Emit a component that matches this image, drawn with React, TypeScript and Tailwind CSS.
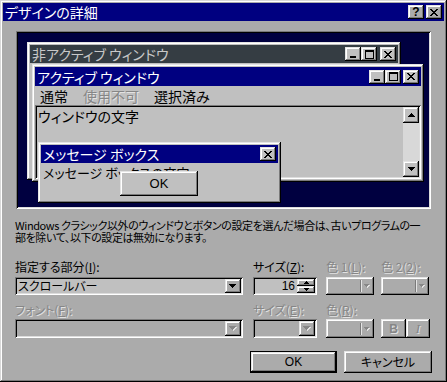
import React from "react";

const RAISED =
  "shadow-[inset_-1px_-1px_0_#000,inset_1px_1px_0_#e4e4e4,inset_-2px_-2px_0_#7a7a7a,inset_2px_2px_0_#fff]";
const SUNKEN =
  "shadow-[inset_1px_1px_0_#7a7a7a,inset_-1px_-1px_0_#fff,inset_2px_2px_0_#000,inset_-2px_-2px_0_#dcdcdc]";
const FONT = "font-['Noto_Sans_CJK_JP','Noto_Sans',sans-serif] [font-feature-settings:'palt']";
const DIS = "text-[#868686] [text-shadow:1px_1px_0_#e2e2e2]";

function XGlyph() {
  return (
    <svg width="8" height="7" viewBox="0 0 8 7" shapeRendering="crispEdges">
      <path
        fill="#000"
        d="M0 0h2v1H0z M6 0h2v1H6z M1 1h2v1H1z M5 1h2v1H5z M2 2h4v1H2z M3 3h2v1H3z M2 4h4v1H2z M1 5h2v1H1z M5 5h2v1H5z M0 6h2v1H0z M6 6h2v1H6z"
      />
    </svg>
  );
}
function MinGlyph() {
  return (
    <svg width="8" height="7" viewBox="0 0 8 7" shapeRendering="crispEdges" className="mt-[1px]">
      <path fill="#000" d="M1 5h6v2H1z" />
    </svg>
  );
}
function MaxGlyph() {
  return (
    <svg width="9" height="9" viewBox="0 0 9 9" shapeRendering="crispEdges">
      <path fill="#000" d="M0 0h9v2H0z M0 2h1v7H0z M8 2h1v7H8z M0 8h9v1H0z" />
    </svg>
  );
}
function DownTri({ dis = false }: { dis?: boolean }) {
  return (
    <svg width="8" height="5" viewBox="0 0 8 5" shapeRendering="crispEdges">
      {dis && <path fill="#e2e2e2" d="M1 1h7v1H1z M2 2h5v1H2z M3 3h3v1H3z M4 4h1v1H4z" />}
      <path fill={dis ? "#868686" : "#000"} d="M0 0h7v1H0z M1 1h5v1H1z M2 2h3v1H2z M3 3h1v1H3z" />
    </svg>
  );
}
function SmallDown({ dis = false }: { dis?: boolean }) {
  return (
    <svg width="6" height="4" viewBox="0 0 6 4" shapeRendering="crispEdges">
      {dis && <path fill="#e2e2e2" d="M1 1h5v1H1z M2 2h3v1H2z M3 3h1v1H3z" />}
      <path fill={dis ? "#868686" : "#000"} d="M0 0h5v1H0z M1 1h3v1H1z M2 2h1v1H2z" />
    </svg>
  );
}
function UpTri() {
  return (
    <svg width="7" height="4" viewBox="0 0 7 4" shapeRendering="crispEdges">
      <path fill="#000" d="M3 0h1v1H3z M2 1h3v1H2z M1 2h5v1H1z M0 3h7v1H0z" />
    </svg>
  );
}

function Cap({ children, face = "bg-[#c0c0c0]" }: { children: React.ReactNode; face?: string }) {
  return (
    <div className={`w-[16px] h-[14px] ${face} ${RAISED} flex items-center justify-center shrink-0`}>
      {children}
    </div>
  );
}

function Preview() {
  return (
    <div className={`mt-[10px] ml-[1px] w-[415px] h-[178px] p-[2px] ${SUNKEN}`}>
      <div className="relative w-full h-full bg-[#000040] overflow-hidden">
        {/* inactive window */}
        <div className={`absolute left-[9px] top-[9px] w-[374px] h-[138px] bg-[#c0c0c0] p-[3px] ${RAISED}`}>
          <div className="h-[18px] bg-[#353d43] flex items-center pl-[2px] pr-[2px]">
            <span className="text-[14px] leading-none text-[#c8c8c8] whitespace-nowrap">非アクティブ ウィンドウ</span>
            <div className="ml-auto flex">
              <Cap><MinGlyph /></Cap>
              <Cap><MaxGlyph /></Cap>
              <div className="w-[3px]" />
              <Cap><XGlyph /></Cap>
            </div>
          </div>
        </div>
        {/* active window */}
        <div className={`absolute left-[14px] top-[31px] w-[392px] h-[118px] bg-[#c0c0c0] p-[3px] flex flex-col ${RAISED}`}>
          <div className="h-[19px] bg-[#000080] flex items-center pl-[2px] pr-[2px] shrink-0">
            <span className="text-[14px] leading-none text-white whitespace-nowrap">アクティブ ウィンドウ</span>
            <div className="ml-auto flex">
              <Cap><MinGlyph /></Cap>
              <Cap><MaxGlyph /></Cap>
              <div className="w-[2px]" />
              <Cap><XGlyph /></Cap>
            </div>
          </div>
          <div className="h-[19px] flex items-center text-[14px] leading-none pl-[5px] shrink-0 whitespace-nowrap">
            <span>通常</span>
            <span className={`ml-[15px] ${DIS}`}>使用不可</span>
            <span className="ml-[15px]">選択済み</span>
          </div>
          <div className={`flex-1 ${SUNKEN} p-[2px] flex`}>
            <div className="flex-1 pl-[1px] pt-[2px] text-[14px] leading-none whitespace-nowrap">ウィンドウの文字</div>
            <div className="w-[16px] flex flex-col bg-[#d8d8d8]">
              <div className={`h-[16px] bg-[#c0c0c0] ${RAISED} flex items-center justify-center`}>
                <UpTri />
              </div>
              <div className="flex-1" />
              <div className={`h-[16px] bg-[#c0c0c0] ${RAISED} flex items-center justify-center`}>
                <svg width="7" height="4" viewBox="0 0 7 4" shapeRendering="crispEdges">
                  <path fill="#000" d="M0 0h7v1H0z M1 1h5v1H1z M2 2h3v1H2z M3 3h1v1H3z" />
                </svg>
              </div>
            </div>
          </div>
        </div>
        {/* message box */}
        <div className={`absolute left-[20px] top-[109px] w-[243px] h-[61px] bg-[#c0c0c0] p-[3px] ${RAISED}`}>
          <div className="h-[18px] bg-[#000080] flex items-center pl-[2px] pr-[2px]">
            <span className="text-[14px] leading-none text-white whitespace-nowrap">メッセージ ボックス</span>
            <div className="ml-auto flex">
              <Cap><XGlyph /></Cap>
            </div>
          </div>
          <div className="pl-[2px] pt-[3px] text-[13px] leading-none whitespace-nowrap">メッセージ ボックスの文字</div>
          <div
            className={`absolute left-[82px] top-[29px] w-[78px] h-[25px] bg-[#c0c0c0] ${RAISED} flex items-center justify-center text-[13px] leading-none font-['Liberation_Sans',sans-serif]`}
          >
            OK
          </div>
        </div>
      </div>
    </div>
  );
}

function Combo({
  className,
  text,
  disabled = false,
}: {
  className: string;
  text?: string;
  disabled?: boolean;
}) {
  return (
    <div className={`${className} ${SUNKEN} p-[2px] flex ${disabled ? "bg-[#ababab]" : "bg-[#c0c0c0]"}`}>
      <div className="flex-1 flex items-center pl-[1px] text-[12px] leading-none whitespace-nowrap">{text}</div>
      <div className={`w-[16px] bg-[#ababab] ${RAISED} flex items-center justify-center`}>
        <DownTri dis={disabled} />
      </div>
    </div>
  );
}

function ColorBtn({ className }: { className: string }) {
  return (
    <div className={`${className} bg-[#ababab] ${RAISED} flex items-center justify-end pr-[4px]`}>
      <div className="w-[1px] h-[12px] bg-[#7a7a7a] shadow-[1px_0_0_#e4e4e4] mr-[3px]" />
      <SmallDown dis />
    </div>
  );
}

export default function App() {
  return (
    <div
      className={`w-[447px] h-[382px] bg-[#ababab] p-[3px] flex flex-col text-black overflow-hidden ${FONT} shadow-[inset_-1px_-1px_0_#000,inset_1px_1px_0_#d8d8d8,inset_-2px_-2px_0_#7a7a7a,inset_2px_2px_0_#fff]`}
    >
      {/* title bar */}
      <div className="h-[18px] bg-[#000080] flex items-center pl-[2px] pr-[2px] shrink-0">
        <span className="text-[14px] leading-none text-white whitespace-nowrap">デザインの詳細</span>
        <div className="ml-auto flex">
          <Cap face="bg-[#ababab]">
            <span className="font-['Liberation_Sans',sans-serif] font-bold text-[12px] leading-none">?</span>
          </Cap>
          <div className="w-[2px]" />
          <Cap face="bg-[#ababab]">
            <XGlyph />
          </Cap>
        </div>
      </div>

      <div className="flex flex-col pl-[12px] pr-[12px]">
        <Preview />

        <p className="mt-[10px] text-[11px] tracking-[-0.4px] leading-[12px] whitespace-nowrap">
          Windows クラシック以外のウィンドウとボタンの設定を選んだ場合は、古いプログラムの一
          <br />
          部を除いて、以下の設定は無効になります。
        </p>

        {/* row 1 labels */}
        <div className="mt-[18px] flex text-[12px] leading-[12px] whitespace-nowrap">
          <div className="w-[238px]">
            指定する部分(<u>I</u>):
          </div>
          <div className="w-[73px]">
            サイズ(<u>Z</u>):
          </div>
          <div className={`w-[55px] ${DIS}`}>
            色 1(<u>L</u>):
          </div>
          <div className={DIS}>
            色 2(<u>2</u>):
          </div>
        </div>
        {/* row 1 controls */}
        <div className="mt-[4px] flex h-[18px]">
          <Combo className="w-[228px] mr-[10px]" text="スクロールバー" />
          <div className={`w-[64px] mr-[9px] ${SUNKEN} bg-[#c0c0c0] p-[2px] flex`}>
            <div className="flex-1 flex items-center justify-end pr-[2px] text-[12px] leading-none font-['Liberation_Sans',sans-serif]">
              16
            </div>
            <div className="w-[18px] flex flex-col">
              <div className={`flex-1 bg-[#ababab] ${RAISED} flex items-center justify-center`}>
                <svg width="5" height="3" viewBox="0 0 5 3" shapeRendering="crispEdges">
                  <path fill="#000" d="M2 0h1v1H2z M1 1h3v1H1z M0 2h5v1H0z" />
                </svg>
              </div>
              <div className={`flex-1 bg-[#ababab] ${RAISED} flex items-center justify-center`}>
                <svg width="5" height="3" viewBox="0 0 5 3" shapeRendering="crispEdges">
                  <path fill="#000" d="M0 0h5v1H0z M1 1h3v1H1z M2 2h1v1H2z" />
                </svg>
              </div>
            </div>
          </div>
          <ColorBtn className="w-[48px] mr-[7px]" />
          <ColorBtn className="w-[48px]" />
        </div>

        {/* row 2 labels */}
        <div className={`mt-[9px] flex text-[12px] leading-[12px] whitespace-nowrap`}>
          <div className={`w-[238px] ${DIS}`}>
            フォント(<u>F</u>):
          </div>
          <div className={`w-[73px] ${DIS}`}>
            サイズ(<u>E</u>):
          </div>
          <div className={DIS}>
            色(<u>R</u>):
          </div>
        </div>
        {/* row 2 controls */}
        <div className="mt-[3px] flex h-[19px]">
          <Combo className="w-[228px] mr-[10px]" disabled />
          <Combo className="w-[64px] mr-[9px]" disabled />
          <ColorBtn className="w-[48px] mr-[7px]" />
          <div
            className={`w-[25px] bg-[#ababab] ${RAISED} flex items-center justify-center font-['Liberation_Sans',sans-serif] font-bold text-[12px] leading-none ${DIS}`}
          >
            B
          </div>
          <div
            className={`w-[24px] bg-[#ababab] ${RAISED} flex items-center justify-center font-['Liberation_Serif',serif] italic text-[13px] leading-none ${DIS}`}
          >
            I
          </div>
        </div>

        {/* buttons */}
        <div className="mt-[13px] flex justify-end">
          <div className="w-[87px] h-[22px] border border-black">
            <div
              className={`w-full h-full bg-[#ababab] ${RAISED} flex items-center justify-center text-[12px] leading-none font-['Liberation_Sans',sans-serif]`}
            >
              OK
            </div>
          </div>
          <div
            className={`ml-[7px] w-[88px] h-[22px] bg-[#ababab] ${RAISED} flex items-center justify-center text-[12px] leading-none`}
          >
            キャンセル
          </div>
        </div>
      </div>
    </div>
  );
}
